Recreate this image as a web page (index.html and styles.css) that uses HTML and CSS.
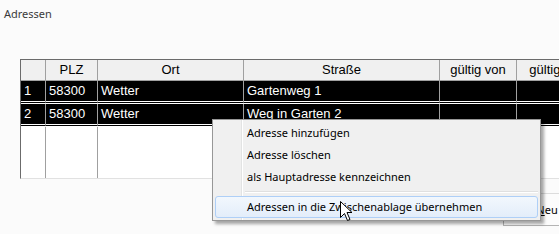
FILE: index.html
```html
<!DOCTYPE html>
<html lang="de">
<head>
<meta charset="utf-8">
<title>Adressen</title>
<link rel="stylesheet" href="styles.css">
</head>
<body>
<div class="title">Adressen</div>
<div class="grid">
  <div class="hc"></div>
  <div class="hc">PLZ</div>
  <div class="hc">Ort</div>
  <div class="hc">Straße</div>
  <div class="hc">gültig von</div>
  <div class="hc">gültig bis</div>

  <div class="dc">1</div>
  <div class="dc">58300</div>
  <div class="dc">Wetter</div>
  <div class="dc">Gartenweg 1</div>
  <div class="dc"></div>
  <div class="dc"></div>

  <div class="dc">2</div>
  <div class="dc">58300</div>
  <div class="dc">Wetter</div>
  <div class="dc">Weg in Garten 2</div>
  <div class="dc"></div>
  <div class="dc"></div>

  <div class="fc"></div>
  <div class="fc"></div>
  <div class="fc"></div>
  <div class="fc"></div>
  <div class="fc"></div>
  <div class="fc"></div>
</div>
<div class="buttons">
  <div class="btn"><u>N</u>eu</div>
</div>

<div class="menu">
  <div class="item">Adresse hinzufügen</div>
  <div class="item">Adresse löschen</div>
  <div class="item">als Hauptadresse kennzeichnen</div>
  <div class="sep"></div>
  <div class="item hot">Adressen in die Zwischenablage übernehmen</div>
</div>

<svg class="cursor" width="13" height="21" viewBox="0 0 13 21">
  <path d="M0.5 0.5 L0.5 16.5 L4.5 12.5 L7.5 19.5 L10 18.5 L7 11.5 L12 11.5 Z" fill="#fff" stroke="#000" stroke-width="1" stroke-linejoin="miter"/>
</svg>
</body>
</html>
```

FILE: styles.css
```css
html, body {
  margin: 0;
  padding: 0;
}
body {
  width: 559px;
  height: 234px;
  overflow: hidden;
  background: #fbfbfb;
  font-family: "Noto Sans", "DejaVu Sans", sans-serif;
  font-size: 11px;
  color: #000;
  position: relative;
}
.title {
  height: 28px;
  line-height: 28px;
  padding-left: 4px;
  color: #3a3a3a;
}
.grid {
  margin-top: 31px;
  margin-left: 20px;
  width: 574px;
  display: grid;
  grid-template-columns: 25px 52px 146px 196px 77px 77px;
  grid-template-rows: 21px 23px 23px 51px;
  border-top: 1px solid #6b6b6b;
  border-left: 1px solid #6b6b6b;
  border-bottom: 1px solid #e1e1e1;
  font-family: "Liberation Sans", Arial, sans-serif;
  font-size: 13px;
}
.grid > div {
  box-sizing: border-box;
  border-right: 1px solid #a0a0a0;
  white-space: nowrap;
  overflow: hidden;
}
.hc {
  background: #f0f0f0;
  border-bottom: 1px solid #a0a0a0;
  text-align: center;
  line-height: 20px;
  color: #000;
}
.dc {
  background: #000;
  color: #fff;
  line-height: 20px;
  padding-left: 3px;
  border-bottom: 3px double #fff;
}
.fc {
  background: #fff;
}
.buttons {
  display: flex;
  padding-left: 503px;
  margin-top: 14px;
}
.btn {
  flex: none;
  box-sizing: border-box;
  width: 88px;
  height: 33px;
  border: 1px solid #b4b4b4;
  border-top-color: #dcdcdc;
  background: #fcfcfc;
  text-align: center;
  line-height: 31px;
  color: #000;
}
.btn u {
  text-decoration: underline;
}
.menu {
  position: absolute;
  left: 212px;
  top: 119px;
  width: 329px;
  box-sizing: border-box;
  padding: 2px;
  border: 1px solid #979797;
  background:
    linear-gradient(to right, transparent 28px, #e2e3e3 28px, #e2e3e3 29px, #ffffff 29px, #ffffff 30px, transparent 30px),
    #f0f0f0;
  box-shadow: 3px 3px 3px rgba(0, 0, 0, 0.35);
}
.item {
  height: 22px;
  line-height: 22px;
  padding-left: 32px;
  box-sizing: border-box;
  white-space: nowrap;
}
.item.hot {
  border: 1px solid #aecff7;
  border-radius: 3px;
  padding-left: 31px;
  line-height: 20px;
  background: linear-gradient(to bottom, #f2f7fd, #e3edfa);
}
.sep {
  height: 8px;
  box-sizing: border-box;
  margin-left: 30px;
  padding-top: 3px;
}
.sep::before {
  content: "";
  display: block;
  border-top: 1px solid #e0e0e0;
  border-bottom: 1px solid #ffffff;
}
.cursor {
  position: absolute;
  left: 340px;
  top: 201px;
}
```
